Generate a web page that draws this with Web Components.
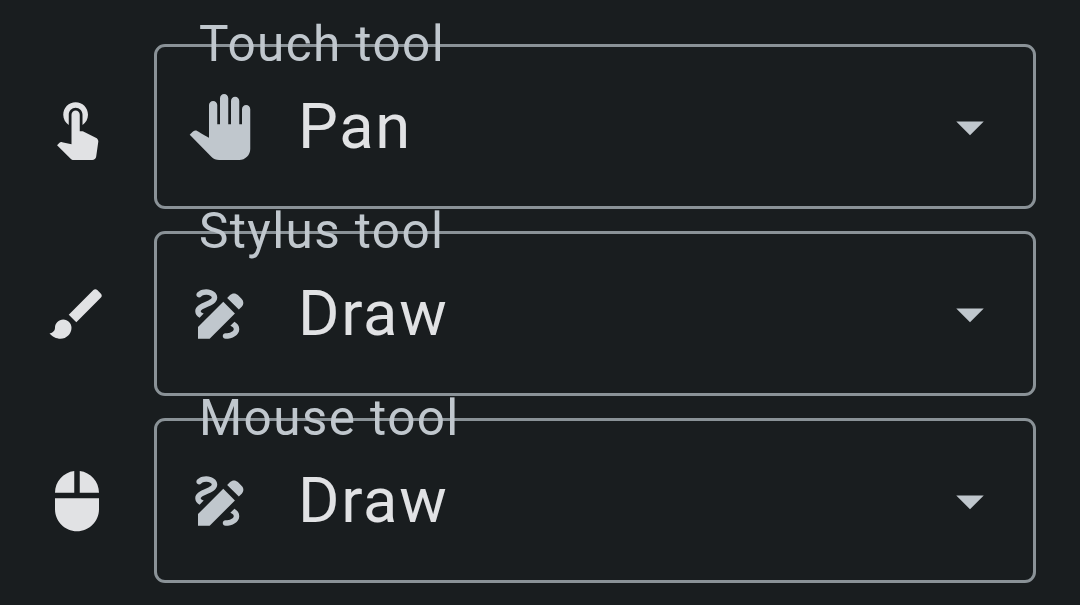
<!DOCTYPE html>
<html lang="en">
<head>
<meta charset="utf-8">
<title>Tools</title>
<style>
html,body{margin:0;height:100%;background:#191d1f}
body{overflow:hidden;font-family:Roboto,sans-serif}
</style>
</head>
<body>
<tool-settings>
  <tool-row icon="touch" label="Touch tool" value="Pan" value-icon="hand"></tool-row>
  <tool-row icon="brush" label="Stylus tool" value="Draw" value-icon="draw"></tool-row>
  <tool-row icon="mouse" label="Mouse tool" value="Draw" value-icon="draw"></tool-row>
</tool-settings>
<script>
const ICONS={
touch:"M9 11.24V7.5C9 6.12 10.12 5 11.5 5S14 6.12 14 7.5v3.74c1.21-.81 2-2.18 2-3.74C16 5.01 13.99 3 11.5 3S7 5.01 7 7.5c0 1.56.79 2.93 2 3.74zm9.84 4.63l-4.54-2.26c-.17-.07-.35-.11-.54-.11H13v-6c0-.83-.67-1.5-1.5-1.5S10 6.67 10 7.5v10.74l-3.43-.72c-.08-.01-.15-.03-.24-.03-.31 0-.59.13-.79.33l-.79.8 4.94 4.94c.27.27.65.44 1.06.44h6.79c.75 0 1.33-.55 1.44-1.28l.75-5.27c.01-.07.02-.14.02-.2 0-.62-.38-1.16-.91-1.38z",
brush:"M7 14c-1.66 0-3 1.34-3 3 0 1.31-1.16 2-2 2 .92 1.22 2.49 2 4 2 2.21 0 4-1.79 4-4 0-1.66-1.34-3-3-3zm13.71-9.37l-1.34-1.34c-.39-.39-1.02-.39-1.41 0L9 12.25 11.75 15l8.96-8.96c.39-.39.39-1.02 0-1.41z",
mouse:"M13 1.07V9h7c0-4.08-3.05-7.44-7-7.93zM4 15c0 4.42 3.58 8 8 8s8-3.58 8-8v-4H4v4zm7-13.93C7.05 1.56 4 4.92 4 9h7V1.07z",
hand:"M23 5.5V20c0 2.2-1.8 4-4 4h-7.3c-1.08 0-2.1-.43-2.85-1.19L1 14.83s1.26-1.23 1.3-1.25c.22-.19.49-.29.79-.29.22 0 .42.06.6.16.04.01 4.31 2.46 4.31 2.46V4c0-.83.67-1.5 1.5-1.5S11 3.17 11 4v7h1V1.5c0-.83.67-1.5 1.5-1.5S15 .67 15 1.5V11h1V2.5c0-.83.67-1.5 1.5-1.5s1.5.67 1.5 1.5V11h1V5.5c0-.83.67-1.5 1.5-1.5s1.5.67 1.5 1.5z",
draw:"M18.85 10.39l1.06-1.06c.78-.78.78-2.05 0-2.83L18.5 5.09c-.78-.78-2.05-.78-2.83 0l-1.06 1.06 4.24 4.24zm-5.66-2.83L4 16.76V21h4.24l9.19-9.19-4.24-4.25zM19 17.5c0 2.19-2.54 3.5-5 3.5-.55 0-1-.45-1-1s.45-1 1-1c1.54 0 3-.73 3-1.5 0-.47-.48-.87-1.23-1.2l1.48-1.48c1.07.63 1.75 1.47 1.75 2.68zM4.58 13.35C3.61 12.79 3 12.06 3 11c0-1.8 1.89-2.63 3.56-3.36C7.59 7.18 9 6.56 9 6c0-.41-.78-1-2-1-1.26 0-1.8.61-1.83.64-.35.41-.98.46-1.4.12-.41-.34-.49-.95-.15-1.38C3.73 4.24 4.76 3 7 3s4 1.32 4 3c0 1.87-1.93 2.72-3.64 3.47C6.42 9.88 5 10.5 5 11c0 .31.43.6 1.07.86l-1.49 1.49z",
arrow:"M7 10l5 5 5-5z"
};
customElements.define("md-icon",class extends HTMLElement{
  connectedCallback(){
    this.attachShadow({mode:"open"}).innerHTML=`<style>:host{display:block;flex:none;width:66px;height:66px}svg{display:block;width:100%;height:100%;fill:currentColor}</style><svg viewBox="0 0 24 24"><path d="${ICONS[this.getAttribute("name")]}"/></svg>`;
  }
});
customElements.define("outlined-select",class extends HTMLElement{
  connectedCallback(){
    this.attachShadow({mode:"open"}).innerHTML=`<style>
:host{display:flex;position:relative;box-sizing:border-box;flex:1;height:165px;border:3px solid #8a9297;border-radius:11px;align-items:center;padding:0 30px;color:#c0c7cd}
.label{position:absolute;left:42px;top:-32px;font-size:49.5px;line-height:58px;letter-spacing:1.375px;white-space:nowrap}
.value{flex:1;margin-left:45px;padding-bottom:2px;font-size:63.25px;line-height:74px;letter-spacing:1.7px;color:#e1e2e4;white-space:nowrap}
</style><span class="label">${this.getAttribute("label")}</span><slot name="leading"></slot><span class="value"><slot></slot></span><md-icon name="arrow"></md-icon>`;
  }
});
customElements.define("tool-row",class extends HTMLElement{
  connectedCallback(){
    const a=n=>this.getAttribute(n);
    this.attachShadow({mode:"open"}).innerHTML=`<style>
:host{display:flex;align-items:center;gap:44px;color:#e1e2e4}
</style><md-icon name="${a("icon")}"></md-icon><outlined-select label="${a("label")}"><md-icon slot="leading" name="${a("value-icon")}"></md-icon>${a("value")}</outlined-select>`;
  }
});
customElements.define("tool-settings",class extends HTMLElement{
  connectedCallback(){
    this.attachShadow({mode:"open"}).innerHTML=`<style>:host{display:flex;flex-direction:column;gap:22px;padding:44px 44px 0}</style><slot></slot>`;
  }
});
</script>
</body>
</html>
